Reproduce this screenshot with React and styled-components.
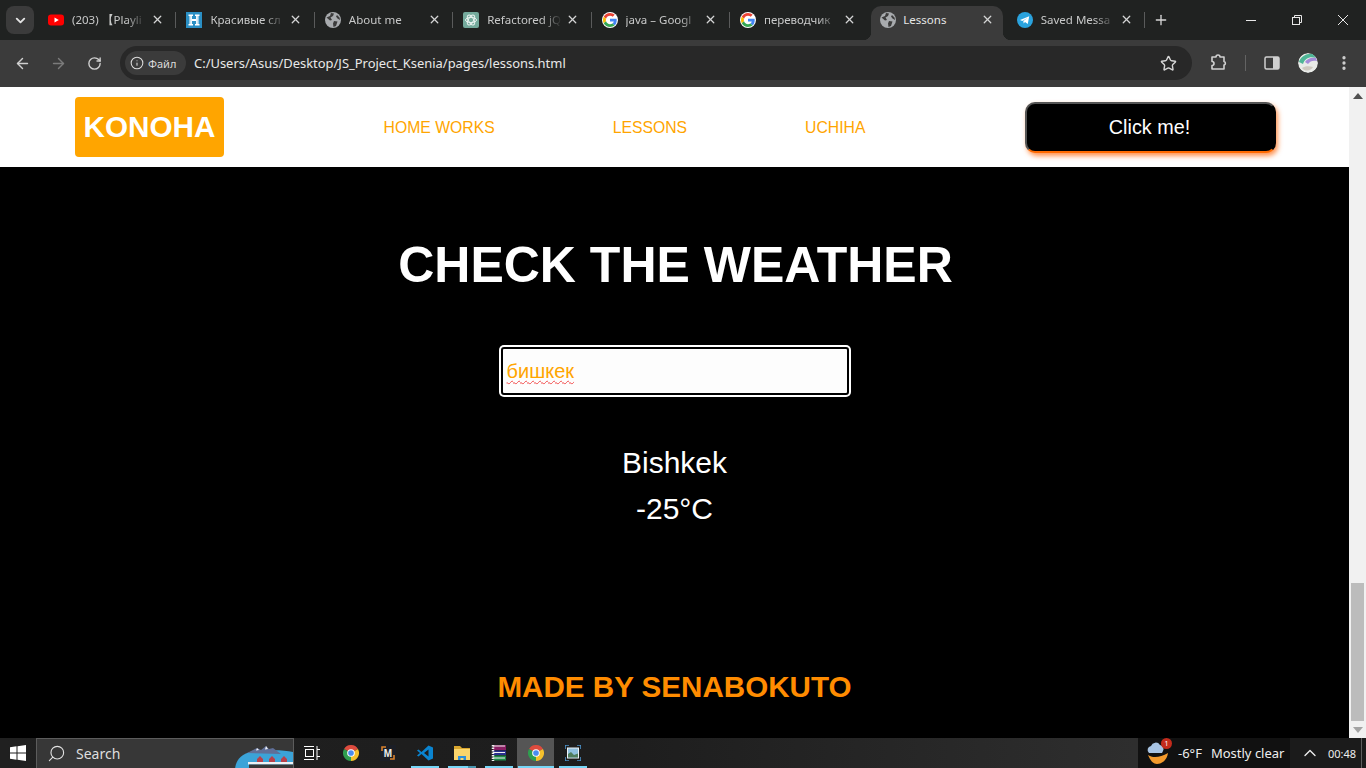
import React from "react";
import styled, { createGlobalStyle } from "styled-components";
import { ArrowLeft, ArrowRight, RotateCw, Star, Info, ChevronDown, ChevronUp, Plus, X, EllipsisVertical, Search as SearchIcon } from "lucide-react";

const GlobalStyle = createGlobalStyle`
    html, body {
        margin: 0;
        height: 100%;
        overflow: hidden;
        background: #000;
        font-family: "Liberation Sans", Arial, sans-serif;
    }
`;

const GoogleIcon = () => (
    <FaviconCircle>
        <svg width="14" height="14" viewBox="0 0 48 48">
            <path fill="#EA4335" d="M24 9.5c3.54 0 6.71 1.22 9.21 3.6l6.85-6.85C35.9 2.38 30.47 0 24 0 14.62 0 6.51 5.38 2.56 13.22l7.98 6.19C12.43 13.72 17.74 9.5 24 9.5z" />
            <path fill="#4285F4" d="M46.98 24.55c0-1.57-.15-3.09-.38-4.55H24v9.02h12.94c-.58 2.96-2.26 5.48-4.78 7.18l7.73 6c4.51-4.18 7.09-10.36 7.09-17.65z" />
            <path fill="#FBBC05" d="M10.53 28.59c-.48-1.45-.76-2.99-.76-4.59s.27-3.14.76-4.59l-7.98-6.19C.92 16.46 0 20.12 0 24c0 3.88.92 7.54 2.56 10.78l7.97-6.19z" />
            <path fill="#34A853" d="M24 48c6.48 0 11.93-2.13 15.89-5.81l-7.73-6c-2.15 1.45-4.92 2.3-8.16 2.3-6.26 0-11.57-4.22-13.47-9.91l-7.98 6.19C6.51 42.62 14.62 48 24 48z" />
        </svg>
    </FaviconCircle>
);

const YoutubeIcon = () => (
    <svg width="16" height="16" viewBox="0 0 16 16">
        <rect y="2.5" width="16" height="11" rx="3" fill="#f00" />
        <path d="M6.5 5.5 10.8 8 6.5 10.5z" fill="#fff" />
    </svg>
);

const HabrIcon = () => (
    <svg width="16" height="16" viewBox="0 0 16 16">
        <rect width="16" height="16" fill="#2a8fc4" />
        <path d="M2.500 2.500h4.500v1.500H6v3h4V4H9V2.500h4.500V4h-1v8h1v1.500H9V12h1V9H6v3h1v1.500H2.500V12h1V4h-1z" fill="#fff" />
        <path d="M4.800 4v8M11.200 4v8" stroke="#a9d4ea" strokeWidth="0.800" />
    </svg>
);

const GlobeIcon = () => (
    <svg width="16" height="16" viewBox="0 0 16 16">
        <circle cx="8" cy="8" r="8" fill="#a8abae" />
        <path d="M1.500 5.500 5 4l1-3 3 .5-1 2.500-2.500 1.500L7 8l-2 .5-3.500-3zM9 9l3.500.5L11 14l-2.500 1L8 11.500zM12 3l2.500 2.500L15 8l-2.500-1.500L11 4.500z" fill="#3c3c3c" />
    </svg>
);

const ChatIcon = () => (
    <svg width="16" height="16" viewBox="0 0 16 16">
        <rect width="16" height="16" rx="2" fill="#74aa9c" />
        <g fill="none" stroke="#e8f2ef" strokeWidth="1">
            <ellipse cx="8" cy="8" rx="5.500" ry="2.600" />
            <ellipse cx="8" cy="8" rx="5.500" ry="2.600" transform="rotate(60 8 8)" />
            <ellipse cx="8" cy="8" rx="5.500" ry="2.600" transform="rotate(120 8 8)" />
        </g>
    </svg>
);

const TelegramIcon = () => (
    <svg width="16" height="16" viewBox="0 0 16 16">
        <circle cx="8" cy="8" r="8" fill="#2aa3de" />
        <path d="M3 8 12.200 4.300 10.800 12 8 10l-1.300 1.500-.4-2.600L10.500 6 5.300 9z" fill="#fff" />
    </svg>
);

const ChromeLogo = () => (
    <svg width="16" height="16" viewBox="0 0 48 48">
        <path d="M24 24 3.200 12A24 24 0 0 1 44.800 12z" fill="#dd4b3e" />
        <path d="M24 24 44.800 12A24 24 0 0 1 24 48z" fill="#f5c02c" />
        <path d="M24 24 24 48A24 24 0 0 1 3.200 12z" fill="#2f9e4f" />
        <circle cx="24" cy="24" r="11.500" fill="#fff" />
        <circle cx="24" cy="24" r="8.500" fill="#4a8cf0" />
    </svg>
);

const MaxIcon = () => (
    <svg width="16" height="16" viewBox="0 0 16 16">
        <rect width="16" height="16" fill="#1b1e26" />
        <path d="M2 6V2h4M14 10v4h-4" fill="none" stroke="#d9822b" strokeWidth="1.600" />
        <text x="8" y="11.500" fontSize="10" fontWeight="700" fill="#eee" textAnchor="middle" fontFamily="Liberation Sans">M</text>
    </svg>
);

const VsCodeIcon = () => (
    <svg width="16" height="16" viewBox="0 0 16 16">
        <path d="M11.500.5 16 2.500v11l-4.500 2L4.500 9l-3 2.400L0 10.500 3 8 0 5.500l1.500-.9 3 2.400z" fill="#0a84d0" />
        <path d="M11.500 4.500 7 8l4.500 3.500z" fill="#1c1c1c" />
    </svg>
);

const FolderIcon = () => (
    <svg width="16" height="16" viewBox="0 0 16 16">
        <path d="M0 1h6l2 2h8v2H0z" fill="#d9a62e" />
        <rect y="4" width="16" height="11" fill="#fbd56b" />
        <path d="M4 15v-4h8v4h-2.500v-2h-3v2z" fill="#2f8fd8" />
    </svg>
);

const RarIcon = () => (
    <svg width="16" height="16" viewBox="0 0 16 16">
        <rect x="2" y="0" width="13" height="5" fill="#8a1f63" />
        <rect x="2" y="5.500" width="13" height="4.500" fill="#2a2f8f" />
        <rect x="2" y="10.500" width="13" height="5" fill="#1f8a4a" />
        <path d="M2 1h12M2 7.500h12M2 13h12" stroke="#f1f1f1" strokeWidth="1" />
        <path d="M2 0v16" stroke="#eee" strokeWidth="2.500" strokeDasharray="1.500 1" />
    </svg>
);

const PhotosIcon = () => (
    <svg width="16" height="16" viewBox="0 0 16 16">
        <path d="M0 4V0h4M12 0h4v4M16 12v4h-4M4 16H0v-4" fill="none" stroke="#4b93cc" strokeWidth="1.600" />
        <rect x="2" y="2.500" width="12" height="11" fill="#eef3f6" />
        <rect x="3" y="3.500" width="10" height="9" fill="#8fc0de" />
        <path d="M3 12.500V9l3-2 3 3 4-1.500v4z" fill="#4f7d5d" />
    </svg>
);

const WindowsLogo = () => (
    <svg width="16" height="16" viewBox="0 0 16 16">
        <path d="M0 2.300 6.500 1.300v6.200H0zM7.500 1.200 16 0v7.500H7.500zM0 8.500h6.500v6.200L0 13.700zM7.500 8.500H16V16l-8.500-1.200z" fill="#fff" />
    </svg>
);

const TaskViewIcon = () => (
    <svg width="16" height="16" viewBox="0 0 16 16" fill="none" stroke="#fff" strokeWidth="1">
        <path d="M0 1.500h10M0 14.500h10" />
        <rect x="1.500" y="4.500" width="8" height="7" />
        <path d="M13 1v14M16 4.500h-3M16 11.500h-3" />
    </svg>
);

const SearchScene = () => (
    <svg width="58" height="30" viewBox="0 0 58 30">
        <path d="M0 30C1 19 9 13 22 12c14-1 27-1 36 1v17z" fill="#3ba3d8" />
        <path d="M12 14 22 9l4 2 5-4 3 3 4-1 8 6z" fill="#5f6f98" />
        <path d="M22 9l2 2-3 .5zM31 7l2 3-3 .5z" fill="#eef0f6" />
        <rect x="13" y="23" width="45" height="2.500" fill="#eef1f4" />
        <rect x="14" y="25.500" width="44" height="4.500" fill="#373737" />
        <path d="M22 20l3-3 3 3v3h-6zM34 20l3-3 3 3v3h-6zM46 20l3-3 3 3v3h-6z" fill="#b8404a" />
    </svg>
);

const WeatherIcon = () => (
    <WeatherWrap>
        <svg width="24" height="26" viewBox="0 0 24 26">
            <path d="M2 15c4 3 12 3 20-2-1 7-6 11-11 11-4 0-7-4-9-9z" fill="#f39a2d" />
            <path d="M3 13a4 4 0 0 1 2-7 5 5 0 0 1 9-1 4 4 0 0 1 3 6l-1 2z" fill="#a8c4e4" />
        </svg>
        <WeatherBadge>1</WeatherBadge>
    </WeatherWrap>
);

const tabs = [
    { title: "(203) 【Playli", icon: <YoutubeIcon /> },
    { title: "Красивые сл", icon: <HabrIcon /> },
    { title: "About me", icon: <GlobeIcon /> },
    { title: "Refactored jQ", icon: <ChatIcon /> },
    { title: "java – Googl", icon: <GoogleIcon /> },
    { title: "переводчик", icon: <GoogleIcon /> },
    { title: "Lessons", icon: <GlobeIcon />, active: true },
    { title: "Saved Messa", icon: <TelegramIcon /> },
];

const taskApps = [
    { name: "chrome", icon: <ChromeLogo /> },
    { name: "max", icon: <MaxIcon /> },
    { name: "code", icon: <VsCodeIcon />, open: true },
    { name: "files", icon: <FolderIcon />, open: true, stacked: true },
    { name: "rar", icon: <RarIcon />, open: true },
    { name: "chrome-active", icon: <ChromeLogo />, open: true, active: true },
    { name: "photos", icon: <PhotosIcon />, open: true },
];

const App = () => {
    return (
        <Screen>
            <GlobalStyle />
            <TabStrip>
                <TabSearch><ChevronDown size={15} strokeWidth={3} /></TabSearch>
                {tabs.map((tab, i) => (
                    <Tab key={i} $active={tab.active}>
                        {tab.icon}
                        <TabTitle $active={tab.active}>{tab.title}</TabTitle>
                        <TabClose $active={tab.active}><X size={13} strokeWidth={2.4} /></TabClose>
                        <TabDivider $hidden={tab.active || i === 5} />
                    </Tab>
                ))}
                <NewTab><Plus size={16} strokeWidth={2} /></NewTab>
                <WindowControls>
                    <WindowButton>
                        <svg width="12" height="12" viewBox="0 0 12 12"><path d="M1 6.500h10" stroke="#e8e8e8" /></svg>
                    </WindowButton>
                    <WindowButton>
                        <svg width="12" height="12" viewBox="0 0 12 12" fill="none" stroke="#e8e8e8"><rect x="1.500" y="3.500" width="7" height="7" /><path d="M3.500 3.500v-2h7v7h-2" /></svg>
                    </WindowButton>
                    <WindowButton>
                        <svg width="12" height="12" viewBox="0 0 12 12"><path d="M1 1l10 10M11 1 1 11" stroke="#e8e8e8" /></svg>
                    </WindowButton>
                </WindowControls>
            </TabStrip>
            <Toolbar>
                <NavIcon><ArrowLeft size={17} strokeWidth={2} /></NavIcon>
                <NavIcon $dim><ArrowRight size={17} strokeWidth={2} /></NavIcon>
                <NavIcon><RotateCw size={15} strokeWidth={2.2} /></NavIcon>
                <Omnibox>
                    <SiteChip><Info size={14} strokeWidth={1.8} />Файл</SiteChip>
                    <Address>C:/Users/Asus/Desktop/JS_Project_Ksenia/pages/lessons.html</Address>
                    <Star size={17} strokeWidth={2} color="#d6d6d6" />
                </Omnibox>
                <ToolIcons>
                    <svg width="18" height="18" viewBox="0 0 18 18" fill="none" stroke="#d0d0d0" strokeWidth="1.600">
                        <path d="M3 3h4a2 2 0 0 1 4 0h4v4.500a1.800 1.800 0 0 1 0 3.500V15H3v-3.500a2 2 0 0 0 0-4z" strokeLinejoin="round" />
                    </svg>
                    <ToolDivider />
                    <svg width="16" height="16" viewBox="0 0 16 16">
                        <rect x="1" y="2" width="14" height="12" rx="1.500" fill="none" stroke="#d0d0d0" strokeWidth="1.500" />
                        <rect x="9" y="2" width="6" height="12" fill="#d0d0d0" />
                    </svg>
                    <Avatar>
                        <svg width="20" height="20" viewBox="0 0 20 20">
                            <circle cx="10" cy="10" r="10" fill="#e9ebe8" />
                            <path d="M1 9C3 3 9 0 15 1l3 4C12 3 7 5 5 11z" fill="#4fb596" />
                            <path d="M7 9c2-3 6-5 11-4l1 3c-4-1-7 0-9 3z" fill="#a48bd8" />
                            <path d="M4 15c3-2 7-2 11-1-2 4-8 5-11 1z" fill="#cfc9c0" />
                        </svg>
                    </Avatar>
                    <EllipsisVertical size={18} strokeWidth={2.4} color="#d0d0d0" />
                </ToolIcons>
            </Toolbar>
            <Viewport>
                <Page>
                    <Header>
                        <Logo>KONOHA</Logo>
                        <Nav>
                            <NavLink>HOME WORKS</NavLink>
                            <NavLink>LESSONS</NavLink>
                            <NavLink>UCHIHA</NavLink>
                        </Nav>
                        <ClickButton>Click me!</ClickButton>
                    </Header>
                    <Main>
                        <Title>CHECK THE WEATHER</Title>
                        <CityField role="textbox"><Misspelled>бишкек</Misspelled></CityField>
                        <City>Bishkek</City>
                        <Temp>-25°C</Temp>
                        <Footer>MADE BY SENABOKUTO</Footer>
                    </Main>
                </Page>
                <Scrollbar>
                    <ScrollArrow><svg width="10" height="6" viewBox="0 0 10 6"><path d="M5 0l5 6H0z" fill="#505050" /></svg></ScrollArrow>
                    <ScrollThumb />
                    <ScrollArrow><svg width="10" height="6" viewBox="0 0 10 6"><path d="M5 6 10 0H0z" fill="#a3a3a3" /></svg></ScrollArrow>
                </Scrollbar>
            </Viewport>
            <Taskbar>
                <StartButton><WindowsLogo /></StartButton>
                <SearchBox>
                    <SearchGlass><SearchIcon size={19} strokeWidth={1.4} /></SearchGlass>
                    <SearchText>Search</SearchText>
                    <SearchScene />
                </SearchBox>
                <TaskView><TaskViewIcon /></TaskView>
                <TaskApps>
                    {taskApps.map((app) => (
                        <TaskApp key={app.name} $active={app.active} $open={app.open} $stacked={app.stacked}>{app.icon}</TaskApp>
                    ))}
                </TaskApps>
                <Tray>
                    <WeatherIcon />
                    <TrayTemp>-6°F</TrayTemp>
                    <TrayText>Mostly clear</TrayText>
                </Tray>
                <SystemArea>
                    <ChevronUp size={20} strokeWidth={1.6} />
                    <Clock>00:48</Clock>
                    <ShowDesktop />
                </SystemArea>
            </Taskbar>
        </Screen>
    );
};

const Screen = styled.div`
    display: flex;
    flex-direction: column;
    width: 1366px;
    height: 768px;
    overflow: hidden;
`;

const TabStrip = styled.div`
    display: flex;
    align-items: flex-end;
    height: 40px;
    flex: none;
    padding-left: 6px;
    background: #202221;
    font-family: "Noto Sans", sans-serif;
`;
const TabSearch = styled.div`
    display: flex;
    align-items: center;
    justify-content: center;
    width: 28px;
    height: 28px;
    margin: 0 4px 6px 0;
    border-radius: 8px;
    background: #3b3b3b;
    color: #e3e3e3;
`;
const Tab = styled.div`
    position: relative;
    display: flex;
    align-items: center;
    box-sizing: border-box;
    flex: none;
    width: ${(p) => (p.$active ? "132px" : "138.4px")};
    height: 34px;
    margin: ${(p) => (p.$active ? "0 3.4px 0 3px" : "0")};
    padding: ${(p) => (p.$active ? "0 0 7px 9px" : "0 0 7px 10px")};
    border-radius: 10px 10px 0 0;
    background: ${(p) => (p.$active ? "#3b3b3b" : "transparent")};
    ${(p) =>
        p.$active &&
        `
        &::before, &::after {
            content: "";
            position: absolute;
            bottom: 0;
            width: 8px;
            height: 8px;
        }
        &::before {
            left: -8px;
            background: radial-gradient(circle at 0 0, transparent 8px, #3b3b3b 8.5px);
        }
        &::after {
            right: -8px;
            background: radial-gradient(circle at 100% 0, transparent 8px, #3b3b3b 8.5px);
        }
    `}
`;
const FaviconCircle = styled.span`
    display: flex;
    align-items: center;
    justify-content: center;
    flex: none;
    width: 16px;
    height: 16px;
    border-radius: 50%;
    background: #fff;
`;
const TabTitle = styled.span`
    flex: 1;
    min-width: 0;
    margin-left: ${(p) => (p.$active ? "7px" : "8px")};
    white-space: nowrap;
    font-size: 11.5px;
    color: ${(p) => (p.$active ? "#e6e6e6" : "#c8c9c9")};
    -webkit-mask-image: ${(p) => (p.$active ? "none" : "linear-gradient(90deg, #000 70%, transparent 96%)")};
    mask-image: ${(p) => (p.$active ? "none" : "linear-gradient(90deg, #000 70%, transparent 96%)")};
`;
const TabClose = styled.span`
    display: flex;
    align-items: center;
    justify-content: center;
    flex: none;
    width: 16px;
    height: 16px;
    margin-right: ${(p) => (p.$active ? "7px" : "10px")};
    color: #d4d5d5;
`;
const TabDivider = styled.span`
    flex: none;
    width: 1px;
    height: 16px;
    background: ${(p) => (p.$hidden ? "transparent" : "#5a5b5b")};
`;
const NewTab = styled.div`
    display: flex;
    align-items: center;
    justify-content: center;
    width: 16px;
    height: 16px;
    margin: 0 0 12px 8px;
    color: #d6d6d6;
`;
const WindowControls = styled.div`
    display: flex;
    align-self: flex-start;
    margin-left: auto;
`;
const WindowButton = styled.div`
    display: flex;
    align-items: center;
    justify-content: center;
    width: 46px;
    height: 40px;
`;

const Toolbar = styled.div`
    display: flex;
    align-items: center;
    box-sizing: border-box;
    height: 47px;
    flex: none;
    padding: 0 0 1px 4px;
    background: #3b3b3b;
`;
const NavIcon = styled.div`
    display: flex;
    align-items: center;
    justify-content: center;
    width: 36px;
    height: 34px;
    color: ${(p) => (p.$dim ? "#7b7b7b" : "#d0d0d0")};
`;
const Omnibox = styled.div`
    display: flex;
    align-items: center;
    box-sizing: border-box;
    width: 1072px;
    height: 34px;
    margin-left: 8px;
    padding: 0 15px 0 5px;
    border-radius: 17px;
    background: #282828;
    font-family: "Noto Sans", sans-serif;
`;
const SiteChip = styled.div`
    display: flex;
    align-items: center;
    gap: 4px;
    box-sizing: border-box;
    width: 61px;
    height: 24px;
    padding-left: 5px;
    border-radius: 12px;
    background: #3b3b3b;
    font-size: 11px;
    color: #dcdcdc;
`;
const Address = styled.div`
    flex: 1;
    margin-left: 8px;
    font-size: 12.95px;
    color: #e8e8e8;
`;
const ToolIcons = styled.div`
    display: flex;
    align-items: center;
    margin-left: 17px;
    & > svg:first-child { margin-right: 18px; }
    & > svg:last-child { margin-left: 17px; }
`;
const ToolDivider = styled.span`
    width: 1px;
    height: 16px;
    margin-right: 18px;
    background: #636363;
`;
const Avatar = styled.span`
    display: flex;
    margin-left: 18px;
    border-radius: 50%;
    overflow: hidden;
`;

const Viewport = styled.div`
    display: flex;
    flex: 1;
    min-height: 0;
`;
const Page = styled.div`
    display: flex;
    flex-direction: column;
    flex: 1;
    min-width: 0;
    background: #000;
`;
const Header = styled.header`
    display: flex;
    align-items: center;
    justify-content: space-between;
    box-sizing: border-box;
    height: 80px;
    flex: none;
    padding: 0 73px 0 75px;
    background: #fff;
`;
const Logo = styled.div`
    display: flex;
    align-items: center;
    justify-content: center;
    width: 149px;
    height: 60px;
    border-radius: 4px;
    background: #ffa500;
    font-size: 29.7px;
    font-weight: 700;
    color: #fff;
`;
const Nav = styled.nav`
    display: flex;
    gap: 118px;
    padding-top: 2px;
`;
const NavLink = styled.a`
    font-size: 15.75px;
    color: #ffa500;
`;
const ClickButton = styled.button`
    box-sizing: border-box;
    width: 251px;
    height: 51px;
    padding: 0 2px 0 0;
    border: 2px solid;
    border-color: #555 #000 #ff6a00 #555;
    border-radius: 10px;
    background: #000;
    box-shadow: 2px 3px 5px rgba(255, 110, 20, 0.75);
    font-family: inherit;
    font-size: 19.8px;
    color: #fff;
`;
const Main = styled.main`
    display: flex;
    flex-direction: column;
    align-items: center;
    flex: 1;
    padding-top: 70px;
`;
const Title = styled.h1`
    margin: 0 0 51px;
    padding-left: 2px;
    font-size: 50px;
    line-height: 57px;
    font-weight: 700;
    color: #fff;
`;
const CityField = styled.div`
    display: flex;
    align-items: center;
    box-sizing: border-box;
    width: 348px;
    height: 48px;
    margin: 2px 0;
    padding: 0 4px;
    border: 2px solid #000;
    border-radius: 3px;
    background: #fdfdfd;
    box-shadow: 0 0 0 2px #fff;
    font-size: 20px;
    color: #ffa500;
`;
const Misspelled = styled.span`
    text-decoration: underline wavy #f24b4b 1px;
    text-underline-offset: 2px;
`;
const City = styled.div`
    margin-top: 43px;
    font-size: 30px;
    line-height: 46px;
    color: #fff;
`;
const Temp = styled.div`
    font-size: 30px;
    line-height: 46px;
    color: #fff;
`;
const Footer = styled.footer`
    margin-top: 135px;
    font-size: 29.6px;
    line-height: 40px;
    font-weight: 700;
    color: #ff8c00;
`;

const Scrollbar = styled.div`
    display: flex;
    flex-direction: column;
    align-items: center;
    flex: none;
    width: 17px;
    background: #f1f1f1;
`;
const ScrollArrow = styled.div`
    display: flex;
    align-items: center;
    justify-content: center;
    height: 17px;
    flex: none;
`;
const ScrollThumb = styled.div`
    width: 13px;
    height: 138px;
    margin-top: auto;
    background: #bcbcbc;
`;

const Taskbar = styled.div`
    display: flex;
    align-items: center;
    height: 30px;
    flex: none;
    background: linear-gradient(90deg, #202020 0%, #1d1d1d 45%, #2e2e2e 83%);
    font-family: "Noto Sans", sans-serif;
`;
const StartButton = styled.div`
    display: flex;
    align-items: center;
    justify-content: center;
    width: 36px;
    flex: none;
`;
const SearchBox = styled.div`
    display: flex;
    align-items: center;
    box-sizing: border-box;
    width: 258px;
    height: 30px;
    flex: none;
    border: 1px solid #5c5c5c;
    border-bottom: none;
    background: #373737;
    overflow: hidden;
`;
const SearchGlass = styled.span`
    display: flex;
    margin-left: 10px;
    color: #e2e2e2;
    transform: scaleX(-1);
`;
const SearchText = styled.span`
    flex: 1;
    margin-left: 10px;
    font-size: 14px;
    color: #dedede;
`;
const TaskView = styled.div`
    display: flex;
    margin-left: 10px;
    flex: none;
`;
const TaskApps = styled.div`
    display: flex;
    margin-left: 12px;
    height: 100%;
`;
const TaskApp = styled.div`
    display: flex;
    align-items: center;
    justify-content: center;
    box-sizing: border-box;
    width: 37px;
    height: 30px;
    background: ${(p) => (p.$active ? "#555" : "transparent")};
    background-image: ${(p) =>
        p.$stacked
            ? "linear-gradient(90deg, #76d6f7 70%, #4a96b0 70%)"
            : p.$open
              ? "linear-gradient(#76d6f7, #76d6f7)"
              : "none"};
    background-repeat: no-repeat;
    background-position: bottom center;
    background-size: ${(p) => (p.$active ? "36px 2px" : "28px 2px")};
`;
const Tray = styled.div`
    display: flex;
    align-items: center;
    box-sizing: border-box;
    width: 152px;
    height: 100%;
    margin-left: auto;
    padding-left: 8px;
    flex: none;
    background: #111;
`;
const WeatherWrap = styled.span`
    position: relative;
    display: flex;
    width: 24px;
`;
const WeatherBadge = styled.span`
    position: absolute;
    top: -2px;
    right: -2px;
    width: 11px;
    height: 11px;
    border-radius: 50%;
    background: #c42b1c;
    font-size: 7px;
    line-height: 11px;
    text-align: center;
    color: #fff;
`;
const TrayTemp = styled.span`
    margin-left: 8px;
    font-size: 13px;
    color: #eee;
`;
const TrayText = styled.span`
    margin-left: 9px;
    font-size: 13px;
    color: #eee;
`;
const SystemArea = styled.div`
    display: flex;
    align-items: center;
    box-sizing: border-box;
    width: 76px;
    height: 100%;
    flex: none;
    padding-left: 10px;
    background: #1b1b1b;
    color: #eee;
`;
const Clock = styled.div`
    margin-left: 8px;
    font-size: 11px;
    color: #eee;
`;
const ShowDesktop = styled.div`
    width: 1px;
    height: 100%;
    margin-left: auto;
    margin-right: 4px;
    background: #5e5e5e;
`;

export default App;
